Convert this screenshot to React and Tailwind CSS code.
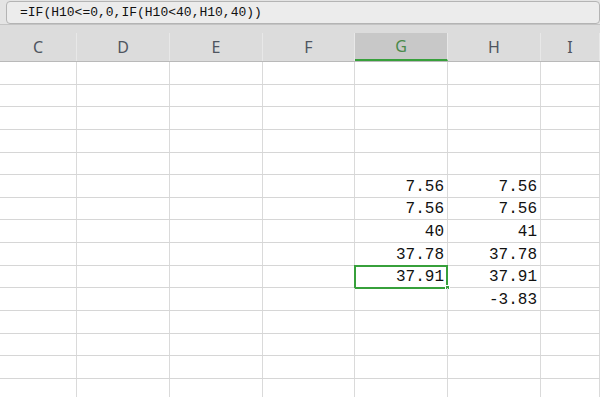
import React from "react";

const cols = ["C", "D", "E", "F", "G", "H", "I"];

// g / h values per data row (row index from top of grid)
const data = {
  5: ["7.56", "7.56"],
  6: ["7.56", "7.56"],
  7: ["40", "41"],
  8: ["37.78", "37.78"],
  9: ["37.91", "37.91"],
  10: ["", "-3.83"],
};

const gridCols = "grid grid-cols-[77px_93px_93px_92px_93px_93px_1fr]";

function Row({ idx }) {
  const vals = data[idx] || ["", ""];
  return (
    <div className={`${gridCols} h-[22.65px] border-b border-[#d6d6d6]`}>
      {cols.map((c) => {
        let text = "";
        if (c === "G") text = vals[0];
        if (c === "H") text = vals[1];
        const selected = c === "G" && idx === 9;
        return (
          <div
            key={c}
            className="relative border-r border-[#dadada] flex items-end justify-end pr-[3px] pb-[1px] text-[16px] leading-[18px] text-[#111]"
            style={{ fontFamily: '"Liberation Mono", monospace' }}
          >
            {text}
            {selected && (
              <>
                <div className="absolute left-[-1px] top-[-1px] w-[94px] h-[24px] border-2 border-[#37a03b]" />
                <div className="absolute right-[-3px] bottom-[-3px] w-[5px] h-[5px] bg-[#37a03b] border border-white" />
              </>
            )}
          </div>
        );
      })}
    </div>
  );
}

export default function App() {
  return (
    <div
      className="w-[600px] h-[397px] overflow-hidden bg-white"
      style={{ fontFamily: '"Noto Sans", sans-serif' }}
    >
      {/* formula bar */}
      <div className="h-[25px] bg-[#e4e4e4] border-b border-[#c4c4c4] pl-[6px] pt-[1px]">
        <div
          className="h-[23px] rounded-[4px] border border-[#b4b4b4] bg-[#ececec] pl-[13px] text-[13px] leading-[21px] text-[#111]"
          style={{ fontFamily: '"Liberation Mono", monospace' }}
        >
          =IF(H10&lt;=0,0,IF(H10&lt;40,H10,40))
        </div>
      </div>

      {/* column headers */}
      <div className="bg-[#dcdcdc] pt-[8px] border-b border-[#b9b9b9]">
        <div className={`${gridCols} h-[28px]`}>
          {cols.map((c) => (
            <div
              key={c}
              className={`flex items-center justify-center text-[16px] border-r border-[#e8e8e8] ${
                c === "G"
                  ? "bg-[#c8c8c8] text-[#4a8a4a] border-b-2 border-b-[#37a03b]"
                  : "text-[#4f5560]"
              }`}
            >
              {c}
            </div>
          ))}
        </div>
      </div>

      {/* grid */}
      <div>
        {Array.from({ length: 15 }).map((_, i) => (
          <Row key={i} idx={i} />
        ))}
      </div>
    </div>
  );
}
